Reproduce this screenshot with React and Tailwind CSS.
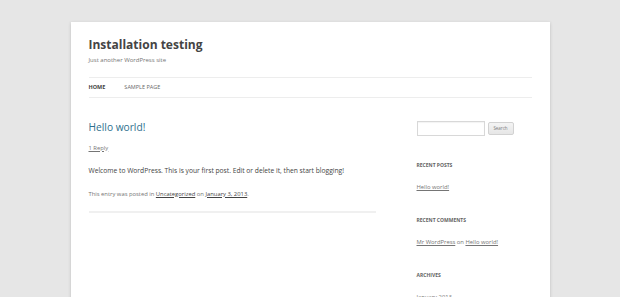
export default function App() {
  return (
    <div className="h-[297px] overflow-hidden bg-[#e6e6e6] pt-[22px] font-['Open_Sans',sans-serif]">
      <div className="mx-auto min-h-[300px] w-[479px] bg-white px-[18px] shadow-[0_1px_3px_rgba(100,100,100,0.3)]">
        {/* Header */}
        <header className="pt-[14.5px]">
          <h1 className="text-[12px] leading-[16px] font-bold text-[#444]">Installation testing</h1>
          <p className="mt-[2px] text-[6px] leading-[10px] text-[#757575]">Just another WordPress site</p>
        </header>

        <nav className="mt-[12px] flex h-[21px] items-center gap-[19px] border-y border-[#ededed] text-[5.5px] leading-[18px] uppercase text-[#5e5e5e]">
          <a className="font-bold text-[#444]">Home</a>
          <a className="text-[#6a6a6a]">Sample Page</a>
        </nav>

        <div className="flex justify-between">
          {/* Main content */}
          <main className="w-[287px] pt-[22px]">
            <article className="border-b-2 border-[#f0f0f0] pb-[12px]">
              <h2 className="text-[10.2px] leading-[14px] text-[#2e6f8e]">Hello world!</h2>
              <a className="mt-[9px] block text-[5.85px] leading-[10px] text-[#757575] underline">1 Reply</a>
              <p className="mt-[13.5px] text-[6.7px] leading-[10px] text-[#444]">
                Welcome to WordPress. This is your first post. Edit or delete it, then start blogging!
              </p>
              <p className="mt-[12.5px] text-[5.85px] leading-[10px] text-[#757575]">
                This entry was posted in <a className="text-[#444] underline">Uncategorized</a> on{' '}
                <a className="text-[#444] underline">January 3, 2013</a>.
              </p>
            </article>
          </main>

          {/* Sidebar */}
          <aside className="w-[115px] pt-[23px]">
            <form className="flex items-center gap-[3px]">
              <div className="h-[15px] w-[68px] border border-[#d8d8d8] bg-white shadow-[inset_0_1px_1px_rgba(0,0,0,0.05)]" />
              <button
                type="button"
                className="h-[13px] w-[26px] rounded-[2px] border border-[#d2d2d2] bg-gradient-to-b from-[#f4f4f4] to-[#e6e6e6] text-[4.5px] leading-none text-[#7c7c7c]"
              >
                Search
              </button>
            </form>

            <div className="mt-[24.5px]">
              <h3 className="text-[5px] leading-[10px] font-bold uppercase text-[#636363]">Recent Posts</h3>
              <a className="mt-[11.7px] block text-[5.85px] leading-[10px] text-[#757575] underline">Hello world!</a>
            </div>

            <div className="mt-[23.4px]">
              <h3 className="text-[5px] leading-[10px] font-bold uppercase text-[#636363]">Recent Comments</h3>
              <p className="mt-[11.7px] text-[5.85px] leading-[10px] text-[#757575]">
                <a className="underline">Mr WordPress</a> on <a className="underline">Hello world!</a>
              </p>
            </div>

            <div className="mt-[23.4px]">
              <h3 className="text-[5px] leading-[10px] font-bold uppercase text-[#636363]">Archives</h3>
              <a className="mt-[11.7px] block text-[5.85px] leading-[10px] text-[#757575] underline">January 2013</a>
            </div>
          </aside>
        </div>
      </div>
    </div>
  );
}
